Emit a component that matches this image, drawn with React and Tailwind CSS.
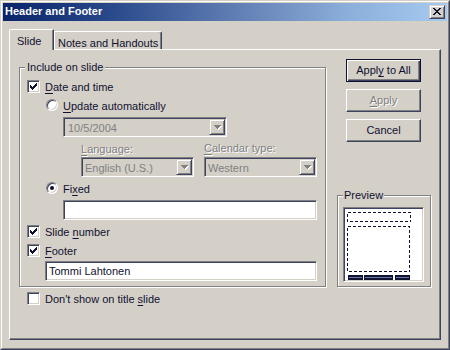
import React from "react";

const sunken =
  "border border-t-[#808080] border-l-[#808080] border-b-white border-r-white shadow-[inset_1px_1px_0_#3b4360,inset_-1px_-1px_0_#d4d0c8]";
const raisedLight =
  "border border-t-[#d4d0c8] border-l-[#d4d0c8] border-b-[#3b4360] border-r-[#3b4360] shadow-[inset_1px_1px_0_#fff,inset_-1px_-1px_0_#808080]";
const btn =
  "border border-t-white border-l-white border-b-[#3b4360] border-r-[#3b4360] shadow-[inset_-1px_-1px_0_#808080]";
const etched =
  "border border-[#808080] shadow-[inset_1px_1px_0_#fff,1px_1px_0_#fff]";

function Check({ checked }) {
  return (
    <div className={`relative w-[13px] h-[13px] shrink-0 bg-white ${sunken}`}>
      {checked && (
        <svg
          className="absolute left-[2px] top-[2px]"
          width="7"
          height="7"
          viewBox="0 0 7 7"
          shapeRendering="crispEdges"
        >
          <path
            fill="#101030"
            d="M0 2h1v3H0z M1 3h1v3H1z M2 4h1v3H2z M3 3h1v3H3z M4 2h1v3H4z M5 1h1v3H5z M6 0h1v3H6z"
          />
        </svg>
      )}
    </div>
  );
}

function Radio({ checked }) {
  return (
    <div className="relative w-[12px] h-[12px] shrink-0 rounded-full bg-white border border-t-[#808080] border-l-[#808080] border-b-white border-r-white shadow-[inset_1px_1px_0_#3b4360,inset_-1px_-1px_0_#d4d0c8]">
      {checked && (
        <div className="absolute left-[3px] top-[3px] w-[4px] h-[4px] rounded-full bg-[#101030]" />
      )}
    </div>
  );
}

function Arrow() {
  return (
    <svg width="8" height="5" viewBox="0 0 8 5" shapeRendering="crispEdges">
      <path
        fill="#ffffff"
        transform="translate(1 1)"
        d="M0 0h7v1H0z M1 1h5v1H1z M2 2h3v1H2z M3 3h1v1H3z"
      />
      <path
        fill="#808080"
        d="M0 0h7v1H0z M1 1h5v1H1z M2 2h3v1H2z M3 3h1v1H3z"
      />
    </svg>
  );
}

function Combo({ className, text, pad }) {
  return (
    <div className={`h-[20px] ${className} ${sunken} bg-[#d4d0c8] flex p-px`}>
      <div className={`flex-1 ${pad} leading-[16px] text-[#808080] pt-px`}>{text}</div>
      <div className={`w-[16px] h-[16px] ${raisedLight} flex items-center justify-center pl-px`}>
        <Arrow />
      </div>
    </div>
  );
}

function Label({ children }) {
  return <span className="leading-[15px] whitespace-nowrap">{children}</span>;
}

function U({ children }) {
  return <span className="underline decoration-1 underline-offset-[2px]">{children}</span>;
}

export default function App() {
  return (
    <div className="w-[450px] h-[350px] bg-[#d4d0c8] text-[11px] text-[#101030] font-['Liberation_Sans',Arial,sans-serif] border border-t-[#d4d0c8] border-l-[#d4d0c8] border-r-[#3b4360] border-b-[#3b4360]">
      <div className="h-full flex flex-col p-px border border-t-white border-l-white border-r-[#808080] border-b-[#808080]">
        {/* Title bar */}
        <div className="h-[18px] shrink-0 flex items-center bg-[linear-gradient(to_right,#0a246a_0%,#2a4a8c_25%,#6683b7_55%,#8cafdb_78%,#a6caf0_100%)]">
          <div className="flex-1 pl-[2px] pb-px text-white font-bold leading-[13px]">Header and Footer</div>
          <div className={`w-[16px] h-[14px] mr-[2px] bg-[#d4d0c8] ${raisedLight} flex items-start justify-start pl-[3px] pt-[2px]`}>
            <svg width="8" height="7" viewBox="0 0 8 7" shapeRendering="crispEdges">
              <path
                fill="#101030"
                d="M0 0h2v1H0z M6 0h2v1H6z M1 1h2v1H1z M5 1h2v1H5z M2 2h4v1H2z M3 3h2v1H3z M2 4h4v1H2z M1 5h2v1H1z M5 5h2v1H5z M0 6h2v1H0z M6 6h2v1H6z"
              />
            </svg>
          </div>
        </div>

        {/* Body */}
        <div className="flex-1 flex flex-col pl-[6px] pt-[8px]">
          {/* Tabs */}
          <div className="h-[20px] flex items-end">
            <div className="relative z-10 w-[45px] h-[21px] -mb-px bg-[#d4d0c8] border-t border-l border-r border-t-white border-l-white border-r-[#3b4360] shadow-[inset_-1px_0_0_#808080] rounded-tl-[2px] pl-[7px] pt-[3px]">
              <span className="leading-[13px]">Slide</span>
            </div>
            <div className="w-[108px] h-[18px] border-t border-l border-r border-t-white border-l-white border-r-[#3b4360] shadow-[inset_-1px_0_0_#808080] rounded-tr-[2px] pl-[3px] pt-[3px]">
              <span className="leading-[13px] whitespace-nowrap">Notes and Handouts</span>
            </div>
          </div>

          {/* Panel */}
          <div className="w-[432px] h-[291px] border border-t-white border-l-white border-r-[#3b4360] border-b-[#3b4360] shadow-[inset_-1px_-1px_0_#808080] flex pl-[9px] pt-[9px]">
            {/* Left column */}
            <div className="flex flex-col mt-[8px]">
              <div className={`relative w-[307px] h-[220px] ${etched} flex flex-col pl-[7px] pt-[12px]`}>
                <div className="absolute left-[5px] top-[-7px] px-[2px] bg-[#d4d0c8] leading-[13px]">
                  Include on slide
                </div>

                <div className="h-[13px] flex items-start gap-[5px]">
                  <Check checked />
                  <Label>
                    <U>D</U>ate and time
                  </Label>
                </div>

                <div className="h-[13px] mt-[6px] ml-[19px] flex items-start gap-[5px]">
                  <Radio />
                  <Label>
                    <U>U</U>pdate automatically
                  </Label>
                </div>

                <Combo className="w-[164px] mt-[5px] ml-[36px]" text="10/5/2004" pad="pl-[3px]" />

                <div className="h-[13px] mt-[4px] ml-[54px] flex text-[#808080] [text-shadow:1px_1px_0_#fff]">
                  <div className="w-[123px]">
                    <Label>
                      <U>L</U>anguage:
                    </Label>
                  </div>
                  <Label>
                    <U>C</U>alendar type:
                  </Label>
                </div>

                <div className="mt-[3px] ml-[54px] flex gap-[10px]">
                  <Combo className="w-[113px]" text="English (U.S.)" pad="pl-[2px]" />
                  <Combo className="w-[113px]" text="Western" pad="pl-[2px]" />
                </div>

                <div className="h-[13px] mt-[5px] ml-[19px] flex items-start gap-[5px]">
                  <Radio checked />
                  <Label>
                    Fi<U>x</U>ed
                  </Label>
                </div>

                <div className={`w-[254px] h-[20px] mt-[5px] ml-[36px] bg-white ${sunken}`} />

                <div className="h-[13px] mt-[5px] flex items-start gap-[5px]">
                  <Check checked />
                  <Label>
                    Slide <U>n</U>umber
                  </Label>
                </div>

                <div className="h-[13px] mt-[6px] flex items-start gap-[5px]">
                  <Check checked />
                  <Label>
                    <U>F</U>ooter
                  </Label>
                </div>

                <div className={`w-[272px] h-[20px] mt-[4px] ml-[18px] bg-white ${sunken} pl-[3px] pt-px`}>
                  <span className="leading-[16px]">Tommi Lahtonen</span>
                </div>
              </div>

              <div className="h-[13px] mt-[5px] pl-[8px] flex items-start gap-[5px]">
                <Check />
                <Label>
                  Don't show on title <U>s</U>lide
                </Label>
              </div>
            </div>

            {/* Right column */}
            <div className="ml-[11px] flex flex-col">
              <div className="ml-[9px] flex flex-col gap-[7px]">
                <div className="w-[75px] h-[23px] border border-[#101030] flex items-center justify-center shadow-[inset_1px_1px_0_#fff,inset_-1px_-1px_0_#3b4360,inset_-2px_-2px_0_#808080]">
                  <span className="leading-[13px]">
                    Appl<U>y</U> to All
                  </span>
                </div>
                <div className={`w-[75px] h-[23px] ${btn} flex items-center justify-center text-[#808080] [text-shadow:1px_1px_0_#fff]`}>
                  <span className="leading-[13px]">
                    <U>A</U>pply
                  </span>
                </div>
                <div className={`w-[75px] h-[23px] ${btn} flex items-center justify-center`}>
                  <span className="leading-[13px]">Cancel</span>
                </div>
              </div>

              <div className={`relative mt-[53px] w-[94px] h-[92px] ${etched} pl-[5px] pt-[11px]`}>
                <div className="absolute left-[5px] top-[-7px] px-[1px] bg-[#d4d0c8] leading-[13px]">
                  Preview
                </div>
                <div className="w-[81px] h-[75px] bg-white border border-t-[#808080] border-l-[#808080] border-b-white border-r-white shadow-[inset_1px_1px_0_#3b4360,inset_-1px_-1px_0_#d4d0c8] p-px">
                  <svg width="77" height="71" viewBox="0 0 77 71" shapeRendering="crispEdges">
                    <rect x="2.5" y="3.5" width="63" height="9" fill="none" stroke="#101030" strokeWidth="1" strokeDasharray="3 2" />
                    <rect x="2.5" y="17.5" width="62" height="45" fill="none" stroke="#101030" strokeWidth="1" strokeDasharray="3 2" />
                    <rect x="3" y="66" width="15" height="5" fill="#101030" />
                    <rect x="19" y="66" width="29" height="5" fill="#101030" />
                    <rect x="50" y="66" width="15" height="5" fill="#101030" />
                    <rect x="4" y="68" width="13" height="1" fill="#6b7aa8" />
                    <rect x="20" y="68" width="27" height="1" fill="#6b7aa8" />
                    <rect x="51" y="68" width="13" height="1" fill="#6b7aa8" />
                  </svg>
                </div>
              </div>
            </div>
          </div>
        </div>
      </div>
    </div>
  );
}
